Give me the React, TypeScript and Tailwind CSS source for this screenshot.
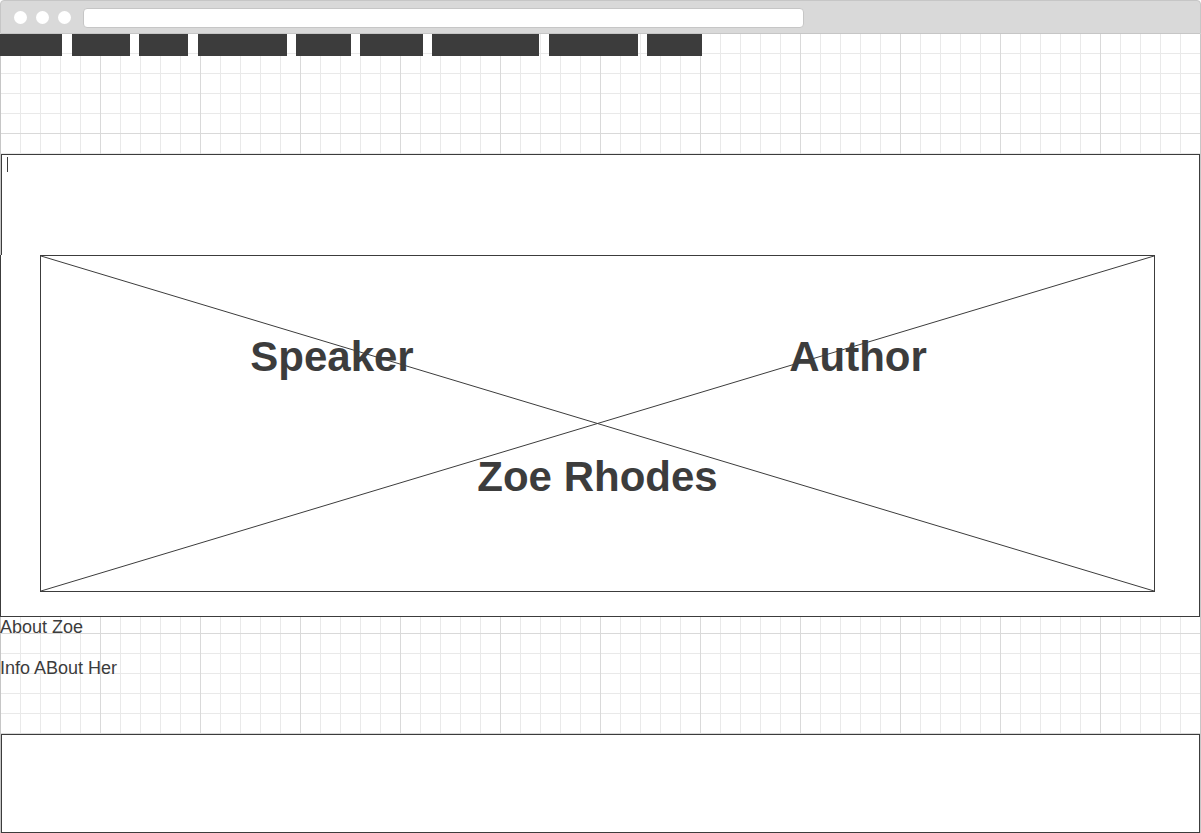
const navWidths = [
  { w: 'w-[62px]', ml: 'ml-0' },
  { w: 'w-[58px]', ml: 'ml-[10px]' },
  { w: 'w-[49px]', ml: 'ml-[9px]' },
  { w: 'w-[89px]', ml: 'ml-[10px]' },
  { w: 'w-[55px]', ml: 'ml-[9px]' },
  { w: 'w-[63px]', ml: 'ml-[9px]' },
  { w: 'w-[107px]', ml: 'ml-[9px]' },
  { w: 'w-[89px]', ml: 'ml-[10px]' },
  { w: 'w-[55px]', ml: 'ml-[9px]' },
];

function BrowserBar() {
  return (
    <div className="flex h-[34px] items-center rounded-t-[4px] border border-[#c6c6c6] bg-[#d9d9d9] pl-[13px]">
      <div className="flex gap-[9px]">
        <span className="h-[13px] w-[13px] rounded-full bg-white" />
        <span className="h-[13px] w-[13px] rounded-full bg-white" />
        <span className="h-[13px] w-[13px] rounded-full bg-white" />
      </div>
      <div className="ml-[12px] mt-px h-[20px] w-[721px] rounded-[4px] border border-[#c6c6c6] bg-white" />
    </div>
  );
}

function HeroImage() {
  return (
    <div className="relative -mt-px ml-[39px] h-[337px] w-[1115px] border border-[#3c3c3c] bg-white">
      <div className="relative flex h-full flex-col pt-[77px] text-[42px] font-bold leading-[48px] text-[#3c3c3c]">
        <div className="flex">
          <div className="w-[582px] text-center">Speaker</div>
          <div className="w-[470px] text-center">Author</div>
        </div>
        <div className="mt-[72px] text-center">Zoe Rhodes</div>
      </div>
      <svg
        className="pointer-events-none absolute inset-0 h-full w-full"
        viewBox="0 0 1113 335"
        preserveAspectRatio="none"
      >
        <line x1="0" y1="0" x2="1113" y2="335" stroke="#3c3c3c" strokeWidth="1" vectorEffect="non-scaling-stroke" />
        <line x1="0" y1="335" x2="1113" y2="0" stroke="#3c3c3c" strokeWidth="1" vectorEffect="non-scaling-stroke" />
      </svg>
    </div>
  );
}

export default function App() {
  return (
    <div className="h-[833px] w-[1201px] overflow-hidden bg-white font-['Liberation_Sans',Arial,sans-serif] text-[#3c3c3c]">
      <BrowserBar />

      <div className="h-[799px] border-x border-[#c6c6c6] [background-image:linear-gradient(to_right,transparent_99px,#d9d9d9_99px),linear-gradient(to_bottom,transparent_99px,#d9d9d9_99px),linear-gradient(to_right,transparent_19px,#e9e9e9_19px),linear-gradient(to_bottom,transparent_19px,#e9e9e9_19px)] [background-size:100px_100px,100px_100px,20px_20px,20px_20px]">
        <nav className="-ml-px flex h-[22px]">
          {navWidths.map((item, i) => (
            <a key={i} className={`${item.w} ${item.ml} h-full bg-[#3c3c3c]`} />
          ))}
        </nav>

        <div className="mt-[98px] h-[102px] border border-[#3c3c3c] bg-white">
          <div className="ml-[5px] mt-[2px] h-[15px] w-px bg-[#3c3c3c]" />
        </div>

        <section className="-ml-px h-[362px] w-[1200px] border-x border-b border-[#3c3c3c] bg-white">
          <HeroImage />
        </section>

        <div className="-ml-px text-[18px] leading-[21px] text-[#3c3c3c]">
          <p>About Zoe</p>
          <p className="mt-[20px]">Info ABout Her</p>
        </div>

        <div className="mt-[55px] h-[99px] border border-[#3c3c3c] bg-white" />
      </div>
    </div>
  );
}
